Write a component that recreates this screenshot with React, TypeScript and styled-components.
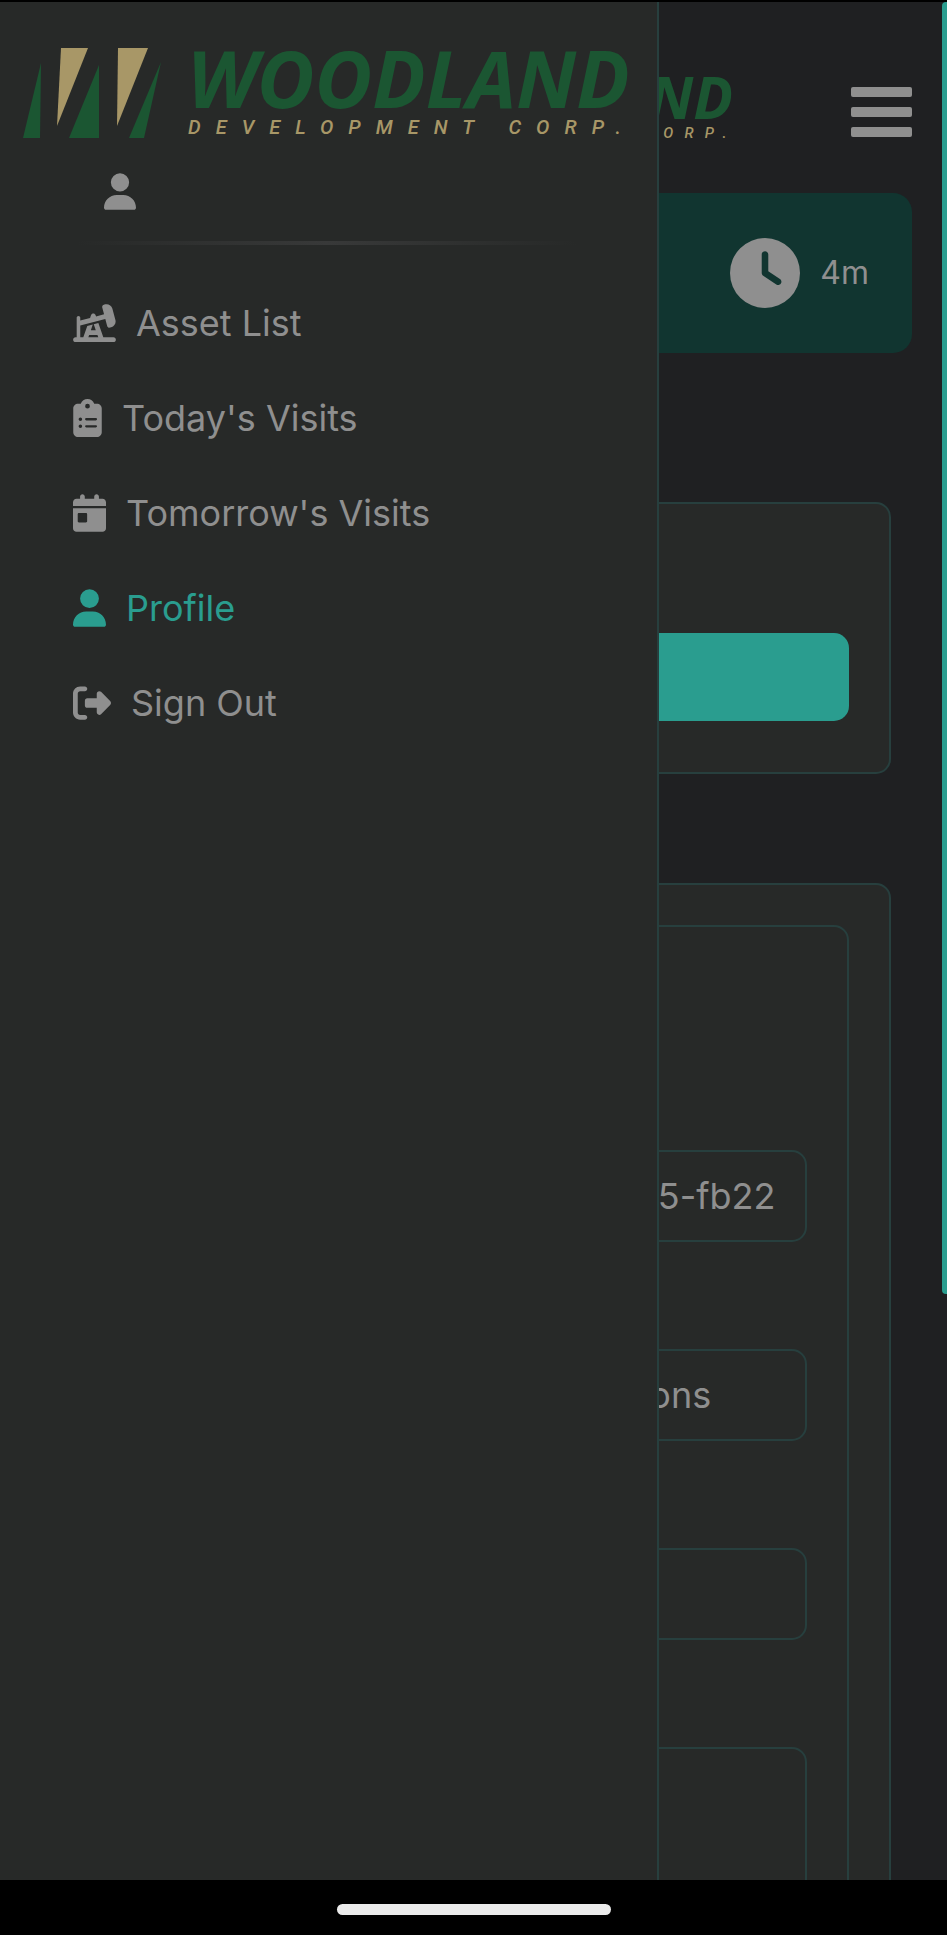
import React from "react";
import styled, { createGlobalStyle } from "styled-components";
import {
  FaCalendarDay,
  FaClipboardList,
  FaClock,
  FaOilWell,
  FaRightFromBracket,
  FaUser,
} from "react-icons/fa6";

const color = {
  page: "#1f2022",
  surface: "#272928",
  line: "#273f3e",
  text: "#8f8f8f",
  accent: "#2a9d8f",
  band: "#113530",
  green: "#1b5632",
  gold: "#a89767",
};

const GlobalStyle = createGlobalStyle`
  *, *::before, *::after { box-sizing: border-box; }
  body {
    margin: 0;
    background: #000;
    color: ${color.text};
    font-family: Inter, "Noto Sans", sans-serif;
  }
`;

const Screen = styled.div`
  display: flex;
  flex-direction: column;
  height: 100vh;
  padding-top: 2px;
`;

const Viewport = styled.div`
  position: relative;
  flex: 1;
  min-height: 0;
  overflow: hidden;
  background: ${color.page};
`;

const SystemBar = styled.div`
  display: flex;
  justify-content: center;
  padding: 24px 0 20px;
  background: #000;
`;

const HomeHandle = styled.div`
  width: 274px;
  height: 11px;
  border-radius: 6px;
  background: #ebebeb;
`;

const ScrollThumb = styled.div`
  position: absolute;
  z-index: 3;
  top: 0;
  right: 0;
  width: 5px;
  height: 1292px;
  border-radius: 4px 0 0 4px;
  background: ${color.accent};
`;

const Header = styled.header`
  display: flex;
  align-items: center;
  justify-content: flex-end;
  gap: 117px;
  padding: 72px 35px 42px;
`;

const LogoLink = styled.a<{ $width: number }>`
  display: block;
  width: ${({ $width }) => $width}px;
  padding-bottom: 10px;
`;

const LogoSvg = styled.svg`
  display: block;
  width: 100%;
  height: auto;
  overflow: visible;
  font-style: italic;
`;

const Wordmark = styled.text`
  font-family: "Noto Sans", sans-serif;
  font-size: 79px;
  font-weight: 700;
`;

const Tagline = styled.text`
  font-family: Roboto, sans-serif;
  font-size: 20px;
  font-weight: 500;
  letter-spacing: 15px;
`;

const IconButton = styled.button`
  display: block;
  padding: 0;
  border: 0;
  background: none;
  color: ${color.text};
  cursor: pointer;

  svg {
    display: block;
  }
`;

const TimerBand = styled.section`
  display: flex;
  align-items: center;
  justify-content: flex-end;
  gap: 20px;
  height: 160px;
  margin: 0 35px;
  padding-right: 43px;
  border-radius: 19px;
  background: ${color.band};
  font-size: 32px;
  line-height: 40px;

  svg {
    width: 70px;
    height: 70px;
  }
`;

const Card = styled.section<{ $gapAbove: number }>`
  margin: ${({ $gapAbove }) => $gapAbove}px 56px 0;
  padding: 40px;
  border: 2px solid ${color.line};
  border-radius: 15px;
  background: ${color.surface};
`;

const CardTitle = styled.h2`
  margin: 0 0 41px;
  font-size: 36px;
  font-weight: 400;
  line-height: 48px;
`;

const PanelTitle = styled(CardTitle)`
  margin-bottom: 76px;
`;

const PrimaryButton = styled.button`
  display: block;
  width: 100%;
  height: 88px;
  margin-bottom: 11px;
  border: 0;
  border-radius: 15px;
  background: ${color.accent};
  color: #fff;
  font: inherit;
  font-size: 36px;
  text-align: left;
  padding: 0 40px;
`;

const Panel = styled.form`
  padding: 40px;
  border: 2px solid ${color.line};
  border-radius: 15px;
`;

const Field = styled.label`
  display: block;
  margin-bottom: 48px;
`;

const FieldName = styled.span`
  display: block;
  margin-bottom: 16px;
  font-size: 36px;
  line-height: 43px;
`;

const TextInput = styled.input`
  display: block;
  width: 100%;
  height: 92px;
  padding: 0 30px;
  border: 2px solid ${color.line};
  border-radius: 15px;
  background: transparent;
  color: ${color.text};
  font: inherit;
  font-size: 36px;
`;

const TextArea = styled.textarea`
  display: block;
  width: 100%;
  height: 240px;
  padding: 24px 30px;
  border: 2px solid ${color.line};
  border-radius: 15px;
  background: transparent;
  color: ${color.text};
  font: inherit;
  font-size: 36px;
  resize: none;
`;

const Drawer = styled.aside`
  position: absolute;
  z-index: 2;
  top: 0;
  bottom: 0;
  left: 0;
  width: 659px;
  max-width: 100%;
  padding: 46px 26px 0 23px;
  border-right: 2px solid ${color.line};
  background: ${color.surface};
`;

const Account = styled.div`
  padding: 25px 0 0 81px;

  svg {
    display: block;
    width: 32px;
    height: 37px;
  }
`;

const Divider = styled.hr`
  height: 4px;
  margin: 31px 54px 0;
  border: 0;
  background: linear-gradient(90deg, transparent, #383939, transparent);
`;

const Menu = styled.ul`
  display: flex;
  flex-direction: column;
  gap: 47px;
  margin: 54px 0 0;
  padding: 0 0 0 50px;
  list-style: none;
`;

const MenuLink = styled.a<{ $active?: boolean; $iconWidth: number }>`
  display: flex;
  align-items: center;
  gap: 20px;
  color: ${({ $active }) => ($active ? color.accent : color.text)};
  font-size: 36px;
  line-height: 48px;
  text-decoration: none;

  svg {
    flex: none;
    width: ${({ $iconWidth }) => $iconWidth}px;
    height: 38px;
  }
`;

function Logo({ width }: { width: number }) {
  return (
    <LogoLink href="#home" $width={width} aria-label="Woodland Development Corp.">
      <LogoSvg viewBox="0 0 608 90">
        <g fill={color.green}>
          <path d="M18 15 17 90H0Z" />
          <path d="M76 17V90H46Z" />
          <path d="M138 14 121 90H106Z" />
        </g>
        <g fill={color.gold}>
          <path d="M38 0H65L34 78Z" />
          <path d="M95 0H125L94 78Z" />
        </g>
        <Wordmark x="164" y="60" fill={color.green}>
          WOODLAND
        </Wordmark>
        <Tagline x="165" y="86" fill={color.gold}>
          DEVELOPMENT CORP.
        </Tagline>
      </LogoSvg>
    </LogoLink>
  );
}

const menu = [
  { label: "Asset List", icon: FaOilWell, iconWidth: 43 },
  { label: "Today's Visits", icon: FaClipboardList, iconWidth: 29 },
  { label: "Tomorrow's Visits", icon: FaCalendarDay, iconWidth: 33 },
  { label: "Profile", icon: FaUser, iconWidth: 33, active: true },
  { label: "Sign Out", icon: FaRightFromBracket, iconWidth: 38 },
];

export default function App() {
  return (
    <Screen>
      <GlobalStyle />
      <Viewport>
        <Header>
          <Logo width={452} />
          <IconButton type="button" aria-label="Toggle menu">
            <svg width="61" height="50" viewBox="0 0 61 50" fill="currentColor">
              <rect width="61" height="10" rx="2" />
              <rect y="20" width="61" height="10" rx="2" />
              <rect y="40" width="61" height="10" rx="2" />
            </svg>
          </IconButton>
        </Header>

        <TimerBand>
          <FaClock />
          <span>4m</span>
        </TimerBand>

        <main>
          <Card $gapAbove={149}>
            <CardTitle>Account</CardTitle>
            <PrimaryButton type="button">Save</PrimaryButton>
          </Card>

          <Card $gapAbove={109}>
            <Panel>
              <PanelTitle>Profile</PanelTitle>
              <Field>
                <FieldName>User ID</FieldName>
                <TextInput readOnly defaultValue="7c40e0d24-93b6-4a08-8e75-fb22c0917d3a" />
              </Field>
              <Field>
                <FieldName>Name</FieldName>
                <TextInput defaultValue="Woodland Reservoir Operations" />
              </Field>
              <Field>
                <FieldName>Phone</FieldName>
                <TextInput />
              </Field>
              <Field>
                <FieldName>Notes</FieldName>
                <TextArea />
              </Field>
            </Panel>
          </Card>
        </main>

        <Drawer>
          <Logo width={608} />
          <Account>
            <FaUser />
          </Account>
          <Divider />
          <nav>
            <Menu>
              {menu.map(({ label, icon: Icon, iconWidth, active }) => (
                <li key={label}>
                  <MenuLink href="#" $active={active} $iconWidth={iconWidth}>
                    <Icon />
                    {label}
                  </MenuLink>
                </li>
              ))}
            </Menu>
          </nav>
        </Drawer>

        <ScrollThumb />
      </Viewport>
      <SystemBar>
        <HomeHandle />
      </SystemBar>
    </Screen>
  );
}
